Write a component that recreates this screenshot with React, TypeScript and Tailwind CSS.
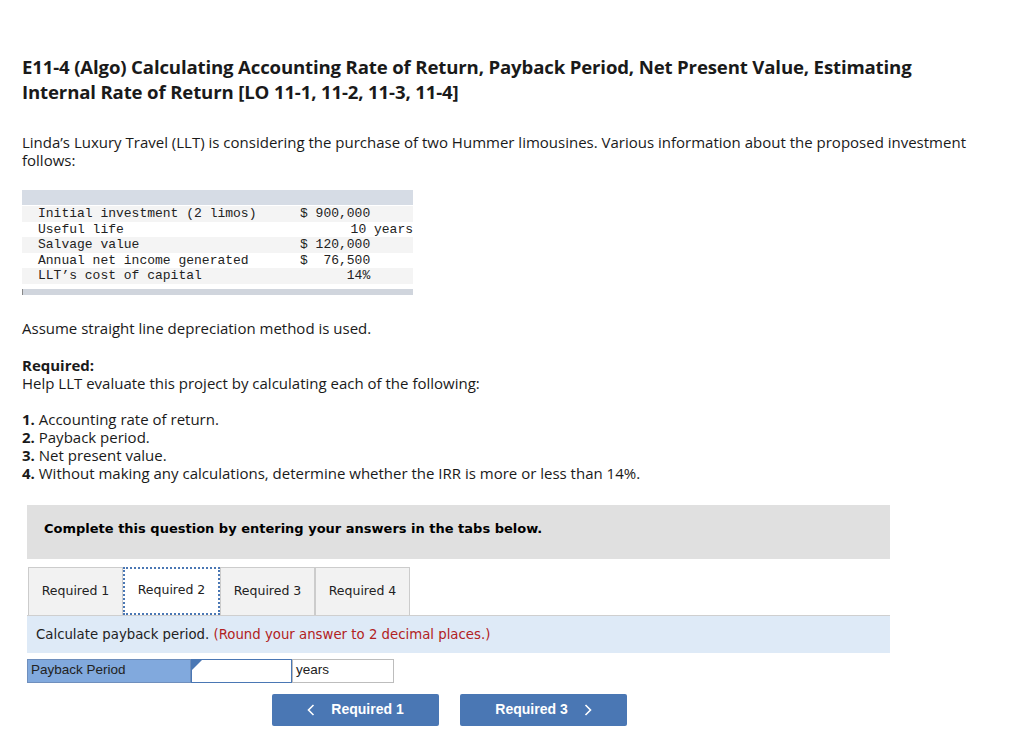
import { useState } from 'react';

const rows = [
  { label: 'Initial investment (2 limos)', value: '$ 900,000' },
  { label: 'Useful life', value: '       10 years' },
  { label: 'Salvage value', value: '$ 120,000' },
  { label: 'Annual net income generated', value: '$  76,500' },
  { label: 'LLT\u2019s cost of capital', value: '      14%' },
];

const tabs = ['Required 1', 'Required 2', 'Required 3', 'Required 4'];

export default function App() {
  const [active] = useState(1);

  return (
    <div className="min-h-[756px] bg-white text-[#1a1a1a] font-['Open_Sans',sans-serif]">
      <div className="pl-[22px] pr-[40px] pt-[54px]">
        <h1 className="text-[18.6px] font-bold leading-[25px] tracking-[-0.15px]">
          E11-4 (Algo) Calculating Accounting Rate of Return, Payback Period, Net Present Value, Estimating
          <br />
          Internal Rate of Return [LO 11-1, 11-2, 11-3, 11-4]
        </h1>

        <p className="mt-[29px] text-[15px] leading-[18px]">
          Linda&rsquo;s Luxury Travel (LLT) is considering the purchase of two Hummer limousines. Various information about the proposed investment follows:
        </p>

        {/* Data table */}
        <div className="mt-[21px] w-[391px] font-['Liberation_Mono',monospace] text-[13px] leading-[15.5px] text-[#222]">
          <div className="h-[15px] bg-[#d6dce5]" />
          <div className="py-[1px]">
            {rows.map((r, i) => (
              <div
                key={r.label}
                className={`flex pl-[16px] ${i % 2 === 0 ? 'bg-[#f4f4f4]' : 'bg-white'}`}
              >
                <span className="w-[262px] whitespace-pre">{r.label}</span>
                <span className="whitespace-pre">{r.value}</span>
              </div>
            ))}
          </div>
          <div className="mt-[4px] h-[6px] border-l border-[#888] bg-[#d0d5dd]" />
        </div>

        <p className="mt-[24px] text-[15px] leading-[18px]">Assume straight line depreciation method is used.</p>

        <p className="mt-[19px] text-[15px] leading-[18px]">
          <span className="font-bold">Required:</span>
          <br />
          Help LLT evaluate this project by calculating each of the following:
        </p>

        <div className="mt-[18px] text-[15px] leading-[18px]">
          <p><span className="font-bold">1.</span> Accounting rate of return.</p>
          <p><span className="font-bold">2.</span> Payback period.</p>
          <p><span className="font-bold">3.</span> Net present value.</p>
          <p><span className="font-bold">4.</span> Without making any calculations, determine whether the IRR is more or less than 14%.</p>
        </div>
      </div>

      {/* Answer area */}
      <div className="ml-[27px] mt-[23px] w-[863px] font-['DejaVu_Sans',Verdana,sans-serif]">
        <div className="h-[54px] bg-[#e0e0e0] pl-[17px] pt-[14px] text-[13px] font-bold text-black">
          Complete this question by entering your answers in the tabs below.
        </div>

        <div className="mt-[8px] flex pl-[1px]">
          {tabs.map((t, i) =>
            i === active ? (
              <div
                key={t}
                className="flex h-[48px] w-[97px] items-center justify-center border-2 border-dotted border-[#4a77b4] bg-white text-[12.5px] text-[#222]"
              >
                {t}
              </div>
            ) : (
              <div
                key={t}
                className="flex h-[48px] w-[95px] items-center justify-center border border-b-0 border-[#cccccc] bg-[#f2f2f2] text-[12.5px] text-[#222]"
              >
                {t}
              </div>
            )
          )}
        </div>

        <div className="h-[38px] border-t border-[#cfcfcf] bg-[#deeaf7] pl-[9px] pt-[10px] text-[13.3px] leading-[18px] text-[#222]">
          Calculate payback period. <span className="text-[#b22222]">(Round your answer to 2 decimal places.)</span>
        </div>

        <div className="mt-[6px] flex h-[24px] font-['Liberation_Sans',Arial,sans-serif] text-[13.5px] text-[#222]">
          <div className="flex w-[164px] items-center border border-[#6f8fbd] bg-[#81a9dd] pl-[3px]">Payback Period</div>
          <div className="relative w-[101px] border border-[#4a77b4] bg-white">
            <span className="absolute left-0 top-0 h-0 w-0 border-l-[5px] border-t-[5px] border-l-[#4a77b4] border-t-[#4a77b4] border-r-[5px] border-r-transparent border-b-[5px] border-b-transparent" />
          </div>
          <div className="flex w-[102px] items-center border border-[#bdbdbd] bg-white pl-[3px]">years</div>
        </div>

        <div className="mt-[11px] flex gap-[21px] pl-[245px] font-['Liberation_Sans',Arial,sans-serif] text-[14px] font-bold text-white">
          <button className="flex h-[32px] w-[167px] items-center justify-center gap-[16px] rounded-[2px] bg-[#4a77b4]">
            <svg width="8" height="12" viewBox="0 0 8 12" fill="none" stroke="white" strokeWidth="1.6">
              <path d="M6.5 1 L1.5 6 L6.5 11" />
            </svg>
            <span>Required 1</span>
          </button>
          <button className="flex h-[32px] w-[167px] items-center justify-center gap-[16px] rounded-[2px] bg-[#4a77b4]">
            <span>Required 3</span>
            <svg width="8" height="12" viewBox="0 0 8 12" fill="none" stroke="white" strokeWidth="1.6">
              <path d="M1.5 1 L6.5 6 L1.5 11" />
            </svg>
          </button>
        </div>
      </div>
    </div>
  );
}
